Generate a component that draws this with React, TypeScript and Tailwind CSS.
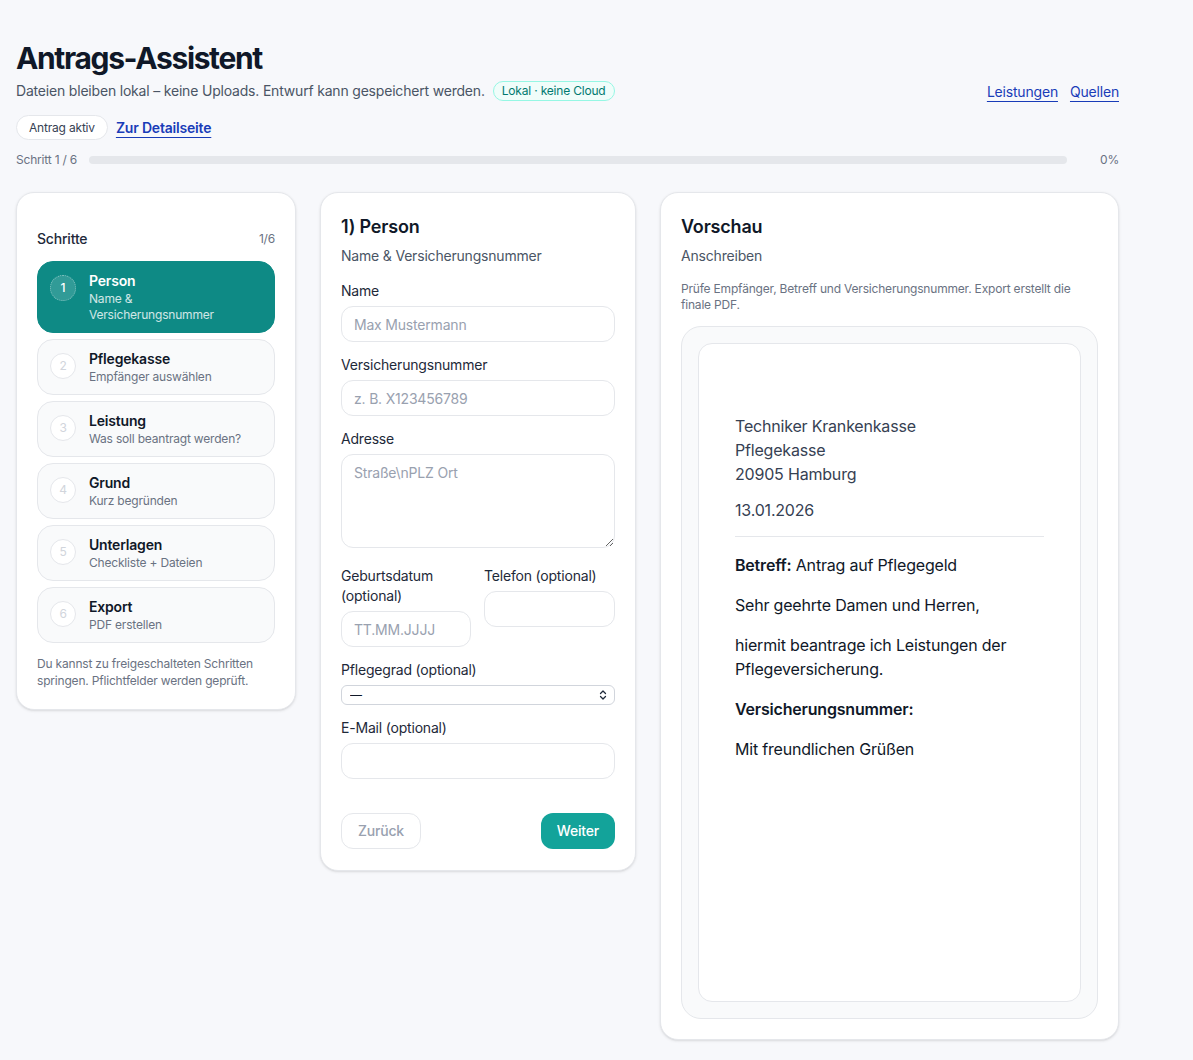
import { ChevronsUpDown } from "lucide-react";

const steps = [
  { n: 1, title: "Person", sub: "Name & Versicherungsnummer" },
  { n: 2, title: "Pflegekasse", sub: "Empfänger auswählen" },
  { n: 3, title: "Leistung", sub: "Was soll beantragt werden?" },
  { n: 4, title: "Grund", sub: "Kurz begründen" },
  { n: 5, title: "Unterlagen", sub: "Checkliste + Dateien" },
  { n: 6, title: "Export", sub: "PDF erstellen" },
];

const inputCls =
  "block h-9 w-full rounded-xl border border-gray-200 bg-white px-3 text-sm text-gray-900 placeholder:text-gray-400 outline-none";

function Field({ label, children }: { label: React.ReactNode; children: React.ReactNode }) {
  return (
    <div>
      <label className="block text-sm leading-5 text-gray-800">{label}</label>
      <div className="mt-[5px]">{children}</div>
    </div>
  );
}

export default function App() {
  return (
    <div
      className="min-h-screen bg-[#f7f8fb] px-4 pb-5 pt-10 tracking-[-0.012em] text-gray-900"
      style={{ fontFamily: "Inter, 'Noto Sans', sans-serif" }}
    >
      <div className="w-[1103px]">
        {/* header */}
        <div className="flex items-center justify-between">
          <div>
            <h1 className="text-3xl font-bold leading-9 tracking-[-0.045em] text-gray-900">
              Antrags-Assistent
            </h1>
            <p className="mt-[5px] flex items-center text-sm leading-5 text-gray-600">
              Dateien bleiben lokal – keine Uploads. Entwurf kann gespeichert werden.
              <span className="ml-2 inline-flex h-5 items-center rounded-full border border-teal-200 bg-teal-50 px-2 text-xs text-teal-700">
                Lokal · keine Cloud
              </span>
            </p>
            <div className="mt-[14px] flex items-center gap-2">
              <span className="inline-flex h-[25px] items-center rounded-full border border-gray-200 bg-white px-3 text-xs text-gray-700">
                Antrag aktiv
              </span>
              <a className="text-sm font-semibold text-blue-800 underline underline-offset-4">
                Zur Detailseite
              </a>
            </div>
          </div>
          <div className="flex items-center gap-3 pt-[3px] text-sm">
            <a className="text-blue-800 underline underline-offset-4">Leistungen</a>
            <a className="text-blue-800 underline underline-offset-4">Quellen</a>
          </div>
        </div>

        {/* progress */}
        <div className="mt-3 flex items-center gap-3">
          <span className="text-xs text-gray-500">Schritt 1 / 6</span>
          <div className="h-2 flex-1 rounded-full bg-gray-200">
            <div className="h-full rounded-full bg-teal-600" style={{ width: "0%" }} />
          </div>
          <span className="w-10 text-right text-xs text-gray-500">0%</span>
        </div>

        {/* columns */}
        <div className="mt-6 grid grid-cols-[280px_316px_1fr] items-start gap-6">
          {/* steps */}
          <div className="rounded-[18px] border border-gray-200 bg-white px-5 pb-5 pt-9 shadow-sm">
            <div className="flex items-center justify-between">
              <span className="text-sm font-medium text-gray-800">Schritte</span>
              <span className="text-xs text-gray-500">1/6</span>
            </div>
            <div className="mt-3 flex flex-col gap-[6px]">
              {steps.map((s) => {
                const active = s.n === 1;
                return (
                  <div
                    key={s.n}
                    className={
                      active
                        ? "flex items-start gap-[13px] rounded-2xl border border-[#0e8a85] bg-[#0e8a85] px-3 py-[9px]"
                        : "flex items-start gap-[13px] rounded-2xl border border-gray-200 bg-gray-50 px-3 py-[9px]"
                    }
                  >
                    <span
                      className={
                        active
                          ? "mt-1 flex h-[26px] w-[26px] shrink-0 items-center justify-center rounded-full border border-dotted border-white/40 bg-white/15 text-xs font-medium text-white"
                          : "mt-1 flex h-[26px] w-[26px] shrink-0 items-center justify-center rounded-full border border-gray-200 bg-white text-xs text-gray-300"
                      }
                    >
                      {s.n}
                    </span>
                    <div className="min-w-0">
                      <div
                        className={
                          active
                            ? "text-sm font-semibold leading-5 text-white"
                            : "text-sm font-semibold leading-5 text-gray-900"
                        }
                      >
                        {s.title}
                      </div>
                      <div
                        className={
                          active
                            ? "w-[140px] text-xs leading-4 text-white/80"
                            : "text-xs leading-4 text-gray-500"
                        }
                      >
                        {s.sub}
                      </div>
                    </div>
                  </div>
                );
              })}
            </div>
            <p className="mt-3 text-xs leading-[17px] text-gray-500">
              Du kannst zu freigeschalteten Schritten springen. Pflichtfelder werden geprüft.
            </p>
          </div>

          {/* form */}
          <div className="rounded-[18px] border border-gray-200 bg-white px-5 pb-[21px] pt-5 shadow-sm">
            <h2 className="text-lg font-semibold leading-7 text-gray-900">1) Person</h2>
            <p className="mt-[5px] text-sm leading-5 text-gray-600">Name & Versicherungsnummer</p>

            <div className="mt-[15px] flex flex-col gap-[13px]">
              <Field label="Name">
                <input className={inputCls} placeholder="Max Mustermann" />
              </Field>
              <Field label="Versicherungsnummer">
                <input className={inputCls} placeholder="z. B. X123456789" />
              </Field>
              <Field label="Adresse">
                <textarea
                  className="block h-[94px] w-full rounded-xl border border-gray-200 bg-white px-3 py-2 text-sm text-gray-900 placeholder:text-gray-400 outline-none"
                  placeholder="Straße\nPLZ Ort"
                />
              </Field>
              <div className="mt-[5px] grid grid-cols-[130px_1fr] gap-[13px]">
                <Field label={<>Geburtsdatum<br />(optional)</>}>
                  <input className={inputCls} placeholder="TT.MM.JJJJ" />
                </Field>
                <Field label="Telefon (optional)">
                  <input className={inputCls} />
                </Field>
              </div>
              <Field label="Pflegegrad (optional)">
                <div className="relative">
                  <select className="block h-5 w-full appearance-none rounded-md border border-gray-300 bg-white px-2 text-xs leading-4 text-gray-900 outline-none">
                    <option>—</option>
                  </select>
                  <ChevronsUpDown
                    className="pointer-events-none absolute right-1.5 top-1/2 h-3 w-3 -translate-y-1/2 text-gray-800"
                    strokeWidth={2.5}
                  />
                </div>
              </Field>
              <Field label="E-Mail (optional)">
                <input className={inputCls} />
              </Field>
            </div>

            <div className="mt-[34px] flex items-center justify-between">
              <button className="h-9 rounded-xl border border-gray-200 bg-white px-4 text-sm font-medium text-gray-400">
                Zurück
              </button>
              <button className="h-9 rounded-xl bg-[#13a39a] px-4 text-sm font-medium text-white">
                Weiter
              </button>
            </div>
          </div>

          {/* preview */}
          <div className="rounded-[18px] border border-gray-200 bg-white px-5 pb-5 pt-5 shadow-sm">
            <h2 className="text-lg font-semibold leading-7 text-gray-900">Vorschau</h2>
            <p className="mt-[5px] text-sm leading-5 text-gray-600">Anschreiben</p>
            <p className="mt-[15px] text-xs leading-4 text-gray-500">
              Prüfe Empfänger, Betreff und Versicherungsnummer. Export erstellt die finale PDF.
            </p>
            <div className="mt-[13px] rounded-[20px] border border-gray-200 bg-gray-50 p-4">
              <div className="h-[659px] rounded-[14px] border border-gray-200 bg-white px-9 pt-[70px]">
                <div className="text-base leading-6 text-gray-700">
                  <div>Techniker Krankenkasse</div>
                  <div>Pflegekasse</div>
                  <div>20905 Hamburg</div>
                  <div className="mt-3">13.01.2026</div>
                </div>
                <div className="mt-[14px] border-t border-gray-200" />
                <div className="mt-4 flex flex-col gap-4 text-base leading-6 text-gray-900">
                  <p>
                    <span className="font-semibold">Betreff:</span> Antrag auf Pflegegeld
                  </p>
                  <p>Sehr geehrte Damen und Herren,</p>
                  <p className="w-[280px]">
                    hiermit beantrage ich Leistungen der Pflegeversicherung.
                  </p>
                  <p className="font-semibold">Versicherungsnummer:</p>
                  <p>Mit freundlichen Grüßen</p>
                </div>
              </div>
            </div>
          </div>
        </div>
      </div>
    </div>
  );
}
